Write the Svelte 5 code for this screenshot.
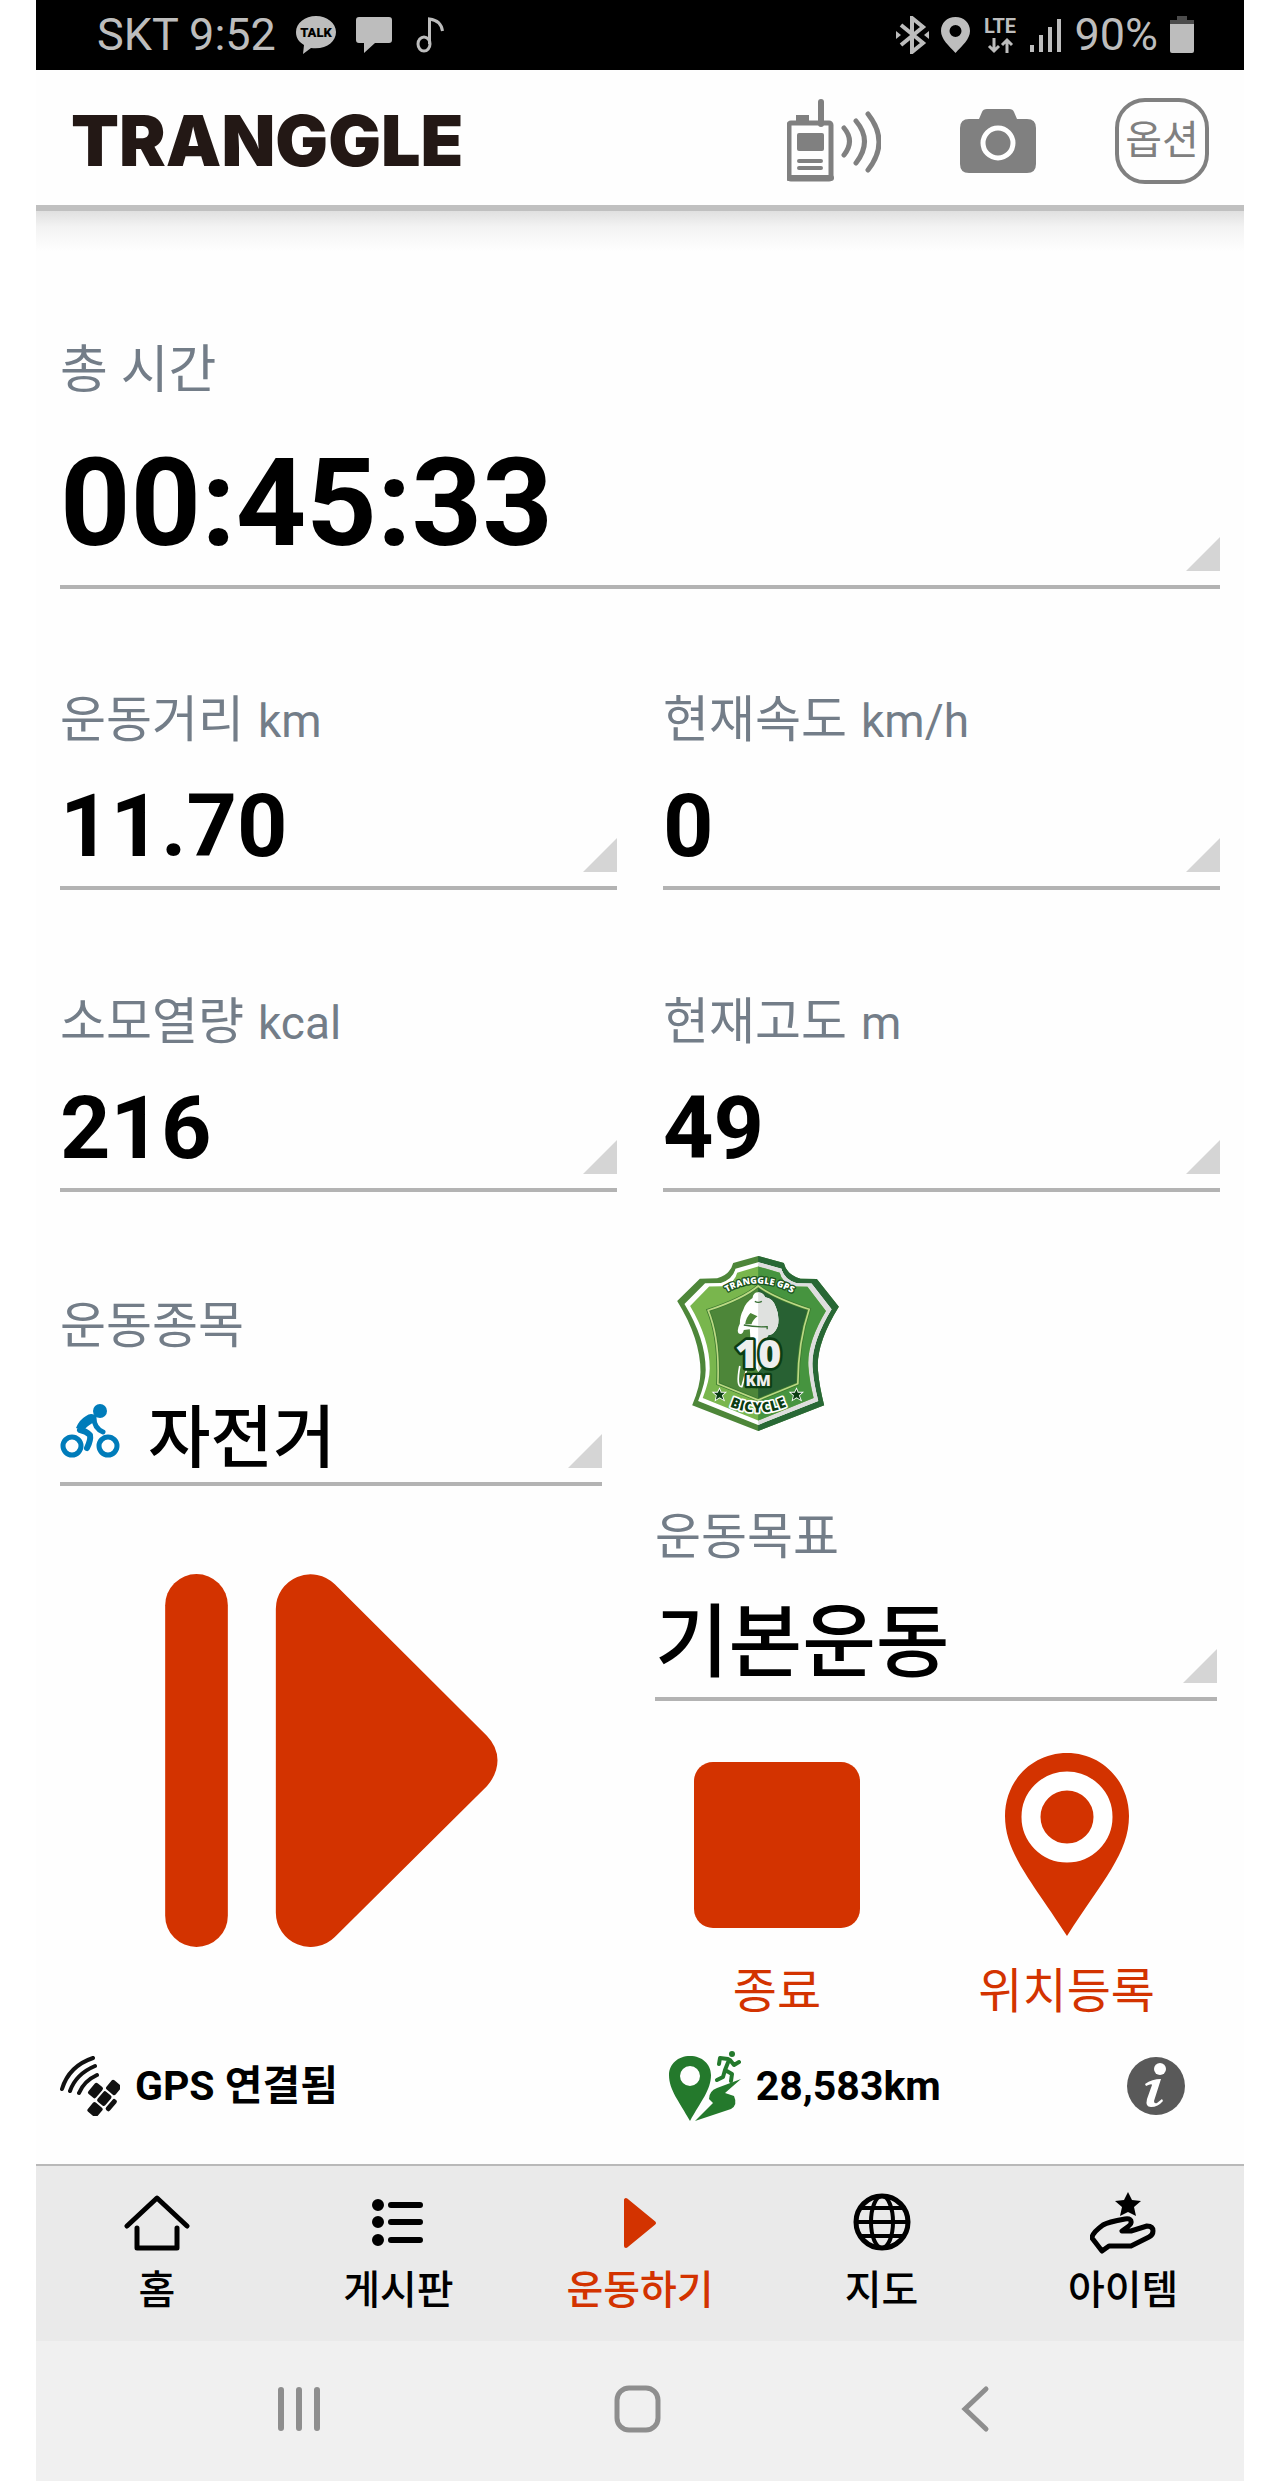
<script lang="ts">
	type Metric = { label: string; unit: string; value: string };

	const elapsed = '00:45:33';

	const metrics: Metric[] = [
		{ label: '운동거리', unit: 'km', value: '11.70' },
		{ label: '현재속도', unit: 'km/h', value: '0' },
		{ label: '소모열량', unit: 'kcal', value: '216' },
		{ label: '현재고도', unit: 'm', value: '49' }
	];

	const tabs = [
		{ id: 'home', label: '홈' },
		{ id: 'board', label: '게시판' },
		{ id: 'workout', label: '운동하기' },
		{ id: 'map', label: '지도' },
		{ id: 'item', label: '아이템' }
	];

	let activeTab = $state('workout');
</script>

<svelte:head>
	<title>TRANGGLE</title>
</svelte:head>

<div class="phone">
	<!-- Status bar -->
	<div class="status-bar">
		<div class="status-group left">
			<span>SKT 9:52</span>
			<svg class="talk" width="40" height="38" viewBox="0 0 40 38">
				<path d="M20 0C9 0 0 7 0 16c0 6 3 10 8 13l-1 9 8-6c15 2 25-6 25-16C40 7 31 0 20 0Z" fill="#bdbdbd" />
				<text x="20" y="21" text-anchor="middle" font-family="Roboto" font-weight="900" font-size="13">TALK</text>
			</svg>
			<svg class="message" width="36" height="36" viewBox="0 0 36 36">
				<path d="M3 0h30q3 0 3 3v20q0 3-3 3H19L8 36V26H3q-3 0-3-3V3q0-3 3-3Z" fill="#bdbdbd" />
			</svg>
			<svg class="note" width="28" height="36" viewBox="0 0 28 36" fill="none" stroke="#bdbdbd" stroke-width="3">
				<ellipse cx="8" cy="27" rx="6" ry="7" />
				<path d="M13.500 27V2c8 1 12 5 13 12" />
			</svg>
		</div>
		<div class="status-group right">
			<svg width="33" height="38" viewBox="0 0 33 38">
				<path d="M5 9l22 18-11 9V2l11 9L5 29" fill="none" stroke="#bdbdbd" stroke-width="4" />
				<path d="M0 15l5 4-5 4zM33 15l-5 4 5 4z" fill="#bdbdbd" />
			</svg>
			<svg width="29" height="36" viewBox="0 0 29 36">
				<path fill-rule="evenodd" d="M14.500 0C6 0 0 6 0 14c0 8 8 15 14.500 22C21 29 29 22 29 14 29 6 23 0 14.500 0Zm0 8a6 6 0 1 1 0 12 6 6 0 0 1 0-12Z" fill="#bdbdbd" />
			</svg>
			<svg class="lte" width="36" height="46" viewBox="0 0 36 46">
				<text x="18" y="21" text-anchor="middle" font-family="Roboto" font-weight="700" font-size="20" fill="#bdbdbd">LTE</text>
				<path d="M12 26v13M7 34l5 5 5-5M25 41V28M20 33l5-5 5 5" fill="none" stroke="#bdbdbd" stroke-width="3" />
			</svg>
			<svg width="32" height="36" viewBox="0 0 32 36" stroke="#bdbdbd" stroke-width="4">
				<path d="M2 28v7M11 18v17M20 10v25M29 2v33" />
			</svg>
			<span>90%</span>
			<svg width="24" height="38" viewBox="0 0 24 38">
				<path d="M7 0h10v4h7v4H0V4h7z" fill="#4c4c4c" />
				<path d="M0 8h24v27q0 2-2 2H2q-2 0-2-2z" fill="#bdbdbd" />
			</svg>
		</div>
	</div>

	<!-- App header -->
	<header class="app-header">
		<h1 class="logo">TRANGGLE</h1>
		<div class="header-actions">
			<button class="icon-button" aria-label="무전기">
				<svg width="94" height="84" viewBox="0 0 94 84" fill="none" stroke="#808080">
					<path d="M34 3v22" stroke-width="6" stroke-linecap="round" />
					<path d="M9 19h13" stroke-width="6" />
					<rect x="2" y="24" width="42" height="56" rx="2" stroke-width="5" />
					<path d="M2 79h42" stroke-width="6" stroke-linecap="round" />
					<rect x="10" y="34" width="27" height="18" rx="2" fill="#808080" stroke="none" />
					<path d="M12 62h22M12 69h22" stroke-width="4" stroke-linecap="round" />
					<path d="M57 29q11 13 0 27M69 22q17 20 0 42M81 15q22 28 0 56" stroke-width="5" stroke-linecap="round" />
				</svg>
			</button>
			<button class="icon-button" aria-label="카메라">
				<svg width="76" height="64" viewBox="0 0 76 64">
					<path d="M9 10h10l3-7q1-3 5-3h22q4 0 5 3l3 7h10q9 0 9 9v36q0 9-9 9H9q-9 0-9-9V19q0-9 9-9Z" fill="#808080" />
					<circle cx="38" cy="34" r="15" fill="none" stroke="#fff" stroke-width="5" />
				</svg>
			</button>
			<button class="option-button">옵션</button>
		</div>
	</header>

	<!-- Workout dashboard -->
	<main>
		<button class="metric total">
			<span class="metric-label">총 시간</span>
			<span class="metric-value">{elapsed}</span>
		</button>

		<div class="metric-grid">
			{#each metrics as metric}
				<button class="metric">
					<span class="metric-label">{metric.label}<small>{metric.unit}</small></span>
					<span class="metric-value">{metric.value}</span>
				</button>
			{/each}
		</div>

		<div class="control-grid">
			<div class="control-left">
				<button class="metric sport">
					<span class="metric-label">운동종목</span>
					<span class="metric-value">
						<svg width="60" height="54" viewBox="0 0 60 54" fill="none" stroke="#007cba">
							<circle cx="12" cy="42" r="9" stroke-width="5" />
							<circle cx="48" cy="42" r="9" stroke-width="5" />
							<circle cx="40" cy="7" r="7" fill="#007cba" stroke="none" />
							<path d="M31 14L20 26q6 1 10 5 1 5-3 13" stroke-width="6" stroke-linecap="round" stroke-linejoin="round" />
							<path d="M34 14q0 10 9 14" stroke-width="5" stroke-linecap="round" />
							<path d="M26 12q5-4 11 0l-3 6-12 8-6-2q3-8 10-12Z" fill="#007cba" stroke="none" />
						</svg>
						자전거
					</span>
				</button>
				<button class="icon-button resume" aria-label="다시 시작">
					<svg width="333" height="373" viewBox="109 102 998 1119" fill="#d33300">
						<rect x="109" y="102" width="188" height="1119" rx="94" />
						<path d="M441 206A104 104 0 0 1 618 133L1074 587Q1106 620 1106 661T1074 739L618 1191A104 104 0 0 1 441 1118Z" />
					</svg>
				</button>
			</div>

			<div class="control-right">
				<svg class="badge" width="162" height="175" viewBox="112 82 485 525" role="img" aria-label="10KM BICYCLE">
					<defs>
						<path id="shield" d="M355 82L432 103Q440 138 482 150L531 151L597 234Q525 350 535 430Q538 470 553 530L355 607L157 530Q182 470 182 430Q182 330 112 217L180 150L232 149Q272 137 280 103Z" />
						<path id="crest" d="M355 172Q400 206 508 242Q475 340 474 465L355 514L234 465Q240 330 205 245Q310 210 355 172Z" />
						<path id="arc-top" d="M246 200Q355 128 472 202" />
						<path id="arc-bottom" d="M246 521Q355 583 464 521" />
						<clipPath id="right-half"><rect x="355" y="80" width="250" height="530" /></clipPath>
					</defs>
					<use href="#shield" fill="#4d8639" />
					<use href="#shield" fill="#286835" clip-path="url(#right-half)" />
					<g transform="translate(355 345) scale(.91 .93) translate(-355 -345)">
						<use href="#shield" fill="#fff" />
						<use href="#shield" fill="#dedede" clip-path="url(#right-half)" />
					</g>
					<g transform="translate(355 345) scale(.84 .88) translate(-355 -345)">
						<use href="#shield" fill="#79b64d" />
						<use href="#shield" fill="#46943f" clip-path="url(#right-half)" />
					</g>
					<use href="#crest" fill="#4d8639" />
					<use href="#crest" fill="#286133" clip-path="url(#right-half)" />
					<use href="#crest" fill="none" stroke="#3c7a30" stroke-width="10" />
					<use href="#crest" fill="none" stroke="#bcd984" stroke-width="5" />
					<!-- Rider -->
					<path d="M338 208Q340 191 355 191Q371 191 376 206Q400 210 408 235Q420 262 414 292Q404 318 385 320L372 345L380 400L355 430L335 395L330 302L312 304Q308 320 296 314Q290 304 300 285Q300 262 310 244Q316 222 338 208Z" fill="#fff" />
					<path d="M355 191Q371 191 376 206Q400 210 408 235Q420 262 414 292Q404 318 385 320L372 345L380 400L355 430Z" fill="#dfe1df" />
					<path d="M332 253l21 10q-14 10-18 24h-19q2-20 16-34Z" fill="#4d8639" />
					<path d="M345 218q10 6 21 0M312 289q32 7 70 5v8" fill="none" stroke="#386f34" stroke-width="4" />
					<path d="M300 412q-12 64 6 62l14-50" fill="none" stroke="#fff" stroke-width="5" />
					<g font-family="Open Sans" font-weight="800" text-anchor="middle" paint-order="stroke" stroke-linejoin="round">
						<text x="355" y="417" font-size="118" fill="#eee" stroke="#0b3d13" stroke-width="16">10</text>
						<text x="355" y="473" font-size="46" fill="#eee" stroke="#0b3d13" stroke-width="14">KM</text>
						<text font-size="27" fill="#fff" stroke="#1c5420" stroke-width="8"><textPath href="#arc-top" startOffset="50%">TRANGGLE GPS</textPath></text>
						<text font-size="43" fill="#0b3d13" stroke="#fff" stroke-width="10"><textPath href="#arc-bottom" startOffset="50%">BICYCLE</textPath></text>
					</g>
					<g fill="#0b3d13" stroke="#fff" stroke-width="5" paint-order="stroke">
						<path d="M239 482l4 10 12 0-9 8 5 13-12-7-11 7 3-13-9-8 12 0z" />
						<path d="M470 482l4 10 12 0-9 8 5 13-12-7-11 7 3-13-9-8 12 0z" />
					</g>
				</svg>

				<button class="metric goal">
					<span class="metric-label">운동목표</span>
					<span class="metric-value">기본운동</span>
				</button>

				<div class="actions">
					<button class="action">
						<span class="action-icon">
							<svg width="166" height="166" viewBox="0 0 166 166"><rect width="166" height="166" rx="19" fill="#d33300" /></svg>
						</span>
						종료
					</button>
					<button class="action">
						<span class="action-icon">
							<svg width="124" height="183" viewBox="0 0 124 183">
								<path d="M62 0C27 0 0 28 0 63c0 37 26 64 62 120 36-56 62-83 62-120C124 28 97 0 62 0Z" fill="#d33300" />
								<circle cx="62" cy="64" r="36" fill="none" stroke="#fff" stroke-width="19" />
							</svg>
						</span>
						위치등록
					</button>
				</div>
			</div>
		</div>

		<div class="info-row">
			<div class="info-item">
				<svg width="60" height="60" viewBox="0 0 60 60" fill="none" stroke="#111">
					<path d="M2 33Q9 10 33 2M10 35Q16 18 35 10M19 37Q24 25 37 19" stroke-width="4" stroke-linecap="round" />
					<g fill="#111" stroke="none" transform="rotate(40 44 43)">
						<rect x="39" y="36" width="10" height="13" rx="2" />
						<rect x="38" y="22" width="12" height="12" rx="2" />
						<rect x="38" y="51" width="12" height="12" rx="2" />
						<rect x="27" y="35" width="10" height="14" rx="2" />
						<rect x="51" y="36" width="5" height="14" rx="2" />
					</g>
				</svg>
				<span>GPS 연결됨</span>
			</div>
			<div class="info-item">
				<svg width="72" height="70" viewBox="0 0 72 70">
					<path fill-rule="evenodd" d="M21 5C9 5 0 13 0 24c0 15 10 26 21 46 11-20 21-31 21-46C42 13 33 5 21 5Zm0 10a10 10 0 1 1 0 20 10 10 0 0 1 0-20Z" fill="#24792c" />
					<path d="M72 28L56 42l9 3q4 9-3 13L26 70l18-18-4-4q0-8 8-11Z" fill="#24792c" />
					<g fill="none" stroke="#24792c" stroke-width="4" stroke-linecap="round" stroke-linejoin="round">
						<path d="M60 9l-4 10 7 4-1 7M56 19l-2 7-6 3M59 8l-8-1-1 6M61 9l4 5 5-3" />
					</g>
					<circle cx="63" cy="3" r="3" fill="#24792c" />
				</svg>
				<span>28,583km</span>
			</div>
			<button class="icon-button" aria-label="정보">
				<svg width="58" height="60" viewBox="0 0 58 60">
					<circle cx="29" cy="30" r="29" fill="#595959" />
					<circle cx="33" cy="13" r="6" fill="#fff" />
					<path d="M18 28q7-5 16-5l-7 22q0 3 3 2l5-4 1 2q-5 6-12 6-6 0-4-8l5-14q0-2-6 1z" fill="#fff" />
				</svg>
			</button>
		</div>
	</main>

	<!-- Tab bar -->
	<nav class="tab-bar">
		{#each tabs as tab}
			<button class="tab" class:active={activeTab === tab.id} onclick={() => (activeTab = tab.id)}>
				<svg width="66" height="62" viewBox="0 0 66 62" fill="none" stroke="currentColor" stroke-linecap="round" stroke-linejoin="round">
					{#if tab.id === 'home'}
						<path d="M3 34L33 6l30 28" stroke-width="5" />
						<path d="M13 36v20h40V36" stroke-width="5" />
					{:else if tab.id === 'board'}
						<path d="M26 13h29M26 30h29M26 48h29" stroke-width="6" />
						<path d="M13 13h0M13 30h0M13 48h0" stroke-width="12" />
					{:else if tab.id === 'workout'}
						<path d="M19 8v46l28-23z" fill="currentColor" stroke-width="4" />
					{:else if tab.id === 'map'}
						<circle cx="33" cy="30" r="26" stroke-width="5" />
						<ellipse cx="33" cy="30" rx="11" ry="26" stroke-width="4" />
						<path d="M7 30h52M13 16h40M13 44h40" stroke-width="4" />
					{:else}
						<path d="M38 0l4 8 9 1-7 6 2 9-8-4-8 4 2-9-7-6 9-1z" fill="currentColor" stroke="none" />
						<path d="M12 59L2 46q0-5 11-13 5-3 22-6 7-1 6 4 0 2-9 8h9l16-5q6 0 6 5 0 4-4 6L41 54H19z" stroke-width="5" />
					{/if}
				</svg>
				<span>{tab.label}</span>
			</button>
		{/each}
	</nav>

	<!-- System navigation -->
	<div class="system-nav">
		<button class="icon-button" aria-label="최근 앱">
			<svg width="48" height="48" viewBox="0 0 48 48" stroke="#8e8e8e" stroke-width="6" stroke-linecap="round">
				<path d="M6 5v38M24 5v38M42 5v38" />
			</svg>
		</button>
		<button class="icon-button" aria-label="홈 화면">
			<svg width="48" height="48" viewBox="0 0 48 48" fill="none" stroke="#8e8e8e" stroke-width="5">
				<rect x="4" y="3" width="41" height="42" rx="12" />
			</svg>
		</button>
		<button class="icon-button" aria-label="뒤로">
			<svg width="48" height="48" viewBox="0 0 48 48" fill="none" stroke="#8e8e8e" stroke-width="5" stroke-linecap="round">
				<path d="M35 4L14 24l21 20" />
			</svg>
		</button>
	</div>
</div>

<style>
	:global(body) {
		margin: 0;
		background: #fff;
	}

	.phone {
		margin: 0 36px;
		background: #fefefe;
		color: #000;
		font-family: Roboto, 'Noto Sans CJK KR', sans-serif;
	}

	svg {
		display: block;
		flex: none;
	}

	button {
		margin: 0;
		padding: 0;
		border: 0;
		background: none;
		color: inherit;
		font: inherit;
		text-align: left;
		cursor: pointer;
	}

	.status-bar {
		display: flex;
		justify-content: space-between;
		align-items: center;
		height: 70px;
		padding: 0 50px 0 61px;
		background: #000;
		color: #bdbdbd;
		font-size: 45px;
		line-height: 52px;
	}

	.status-group {
		display: flex;
		align-items: center;
	}

	.left {
		gap: 20px;
	}

	.note {
		margin-left: 4px;
	}

	.right {
		gap: 12px;
	}

	.app-header {
		display: flex;
		justify-content: space-between;
		align-items: center;
		height: 129px;
		padding: 6px 35px 0;
		border-bottom: 6px solid #c0c0c0;
	}

	.logo {
		margin: 0;
		color: #231815;
		font-family: Inter, sans-serif;
		font-size: 70px;
		font-weight: 900;
		line-height: 80px;
	}

	.header-actions {
		display: flex;
		align-items: center;
		gap: 79px;
	}

	.option-button {
		width: 94px;
		height: 86px;
		border: 4px solid #808080;
		border-radius: 30px;
		color: #808080;
		font-size: 40px;
		line-height: 40px;
		text-align: center;
	}

	main {
		padding: 130px 24px 43px;
		background: linear-gradient(#e0e0e0, #f3f3f3 16px, #fefefe 40px);
	}

	.metric {
		position: relative;
		display: flex;
		flex-direction: column;
		gap: 32px;
		width: 100%;
		padding-bottom: 16px;
		border-bottom: 4px solid #b3b3b3;
	}

	.metric::after {
		content: '';
		position: absolute;
		right: 0;
		bottom: 14px;
		width: 34px;
		height: 34px;
		background: #d5d5d5;
		clip-path: polygon(100% 0, 100% 100%, 0 100%);
	}

	.metric-label {
		display: flex;
		align-items: baseline;
		gap: 14px;
		height: 60px;
		color: #737d88;
		font-size: 50px;
		line-height: 60px;
	}

	.metric-label small {
		font-size: 46px;
	}

	.metric-value {
		font-size: 88px;
		font-weight: 700;
		line-height: 88px;
	}

	.total {
		gap: 42px;
		padding-bottom: 22px;
	}

	.total .metric-label {
		font-size: 52px;
	}

	.total .metric-value {
		font-size: 123px;
		line-height: 120px;
	}

	.metric-grid {
		display: grid;
		grid-template-columns: 1fr 1fr;
		gap: 102px 46px;
		margin-top: 101px;
	}

	.control-grid {
		display: grid;
		grid-template-columns: 542fr 562fr;
		gap: 53px;
		padding-right: 3px;
	}

	.control-left {
		display: flex;
		flex-direction: column;
		align-items: center;
		gap: 88px;
		padding-top: 104px;
	}

	.sport {
		gap: 48px;
		padding-bottom: 8px;
	}

	.sport .metric-value {
		display: flex;
		align-items: flex-start;
		gap: 28px;
		font-size: 68px;
		font-weight: 500;
		line-height: 70px;
	}

	.control-right {
		padding-top: 64px;
	}

	.badge {
		margin-left: 22px;
	}

	.goal {
		gap: 36px;
		margin-top: 76px;
		padding-bottom: 14px;
	}

	.goal .metric-value {
		font-size: 80px;
		font-weight: 500;
		line-height: 80px;
	}

	.actions {
		display: flex;
		justify-content: space-between;
		margin-top: 52px;
		padding: 0 62px 0 39px;
	}

	.action {
		display: flex;
		flex-direction: column;
		align-items: center;
		gap: 32px;
		color: #d33300;
		font-size: 48px;
		line-height: 48px;
	}

	.action-icon {
		display: flex;
		align-items: center;
		height: 183px;
	}

	.info-row {
		display: grid;
		grid-template-columns: 611fr 460fr auto;
		align-items: center;
		margin-top: 35px;
		padding-right: 35px;
		font-size: 41px;
		font-weight: 700;
		line-height: 48px;
	}

	.info-item {
		display: flex;
		align-items: center;
		gap: 15px;
	}

	.tab-bar {
		display: flex;
		border-top: 2px solid #b9b9b9;
		background: #eaeaea;
	}

	.tab {
		display: flex;
		flex: 1;
		flex-direction: column;
		align-items: center;
		gap: 17px;
		padding: 26px 0 30px;
		font-size: 40px;
		font-weight: 500;
		line-height: 40px;
	}

	.tab.active {
		color: #d33300;
	}

	.system-nav {
		display: flex;
		justify-content: space-around;
		padding: 44px 100px 48px 94px;
		background: #f0f0f0;
	}
</style>
